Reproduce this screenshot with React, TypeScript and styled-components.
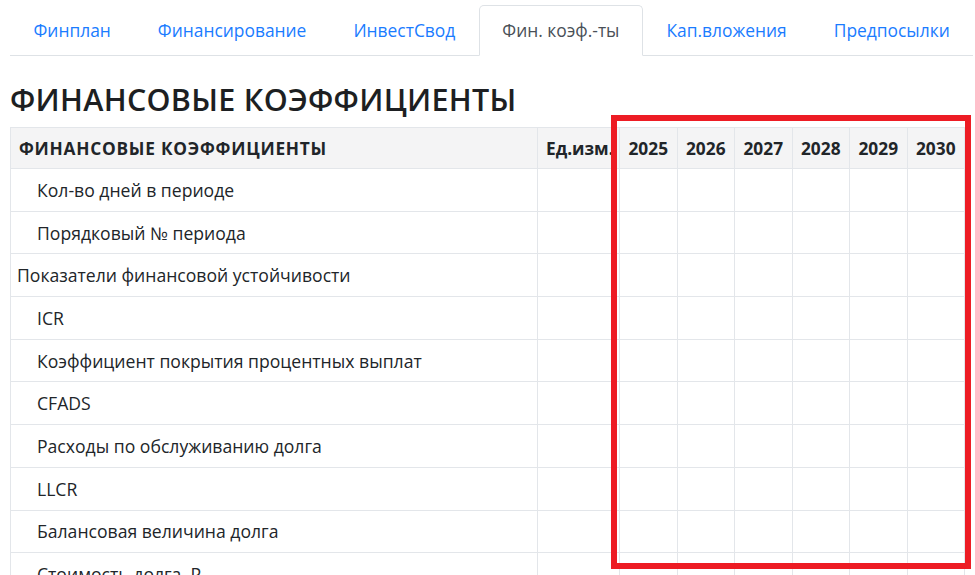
import styled, { createGlobalStyle } from 'styled-components';

const GlobalStyle = createGlobalStyle`
    html, body {
        margin: 0;
        padding: 0;
        background: #fff;
    }
    body {
        font-family: "Open Sans", "Liberation Sans", sans-serif;
        color: #212529;
        overflow: hidden;
    }
`;

const years = [2025, 2026, 2027, 2028, 2029, 2030];

const tabs = ['Финплан', 'Финансирование', 'ИнвестСвод', 'Фин. коэф.-ты', 'Кап.вложения', 'Предпосылки'];
const activeTab = 'Фин. коэф.-ты';

const rows = [
    { title: 'Кол-во дней в периоде', sub: true },
    { title: 'Порядковый № периода', sub: true },
    { title: 'Показатели финансовой устойчивости', sub: false },
    { title: 'ICR', sub: true },
    { title: 'Коэффициент покрытия процентных выплат', sub: true },
    { title: 'CFADS', sub: true },
    { title: 'Расходы по обслуживанию долга', sub: true },
    { title: 'LLCR', sub: true },
    { title: 'Балансовая величина долга', sub: true },
    { title: 'Стоимость долга, Р', sub: true },
];

const Page = styled.div`
    padding: 5px 2px 0 10px;
`;

const TabBar = styled.ul`
    display: flex;
    margin: 0;
    padding: 0;
    list-style: none;
    border-bottom: 1px solid #dee2e6;
`;

const Tab = styled.li<{ $active?: boolean }>`
    margin-bottom: -1px;
    padding: 12px 22.5px 13px;
    font-size: 17.4px;
    line-height: 24px;
    color: ${(p) => (p.$active ? '#495057' : '#1a7cff')};
    background: ${(p) => (p.$active ? '#fff' : 'transparent')};
    border: 1px solid ${(p) => (p.$active ? '#dee2e6' : 'transparent')};
    border-bottom-color: ${(p) => (p.$active ? '#fff' : 'transparent')};
    border-radius: 5px 5px 0 0;
    white-space: nowrap;
`;

const Title = styled.h1`
    margin: 25px 0 10px;
    font-size: 30.5px;
    line-height: 36px;
    font-weight: 600;
    letter-spacing: 0.3px;
    color: #1d1f22;
`;

const TableWrap = styled.div`
    position: relative;
    width: 954px;
`;

const Table = styled.table`
    width: 954px;
    border-collapse: collapse;
    table-layout: fixed;
    font-size: 17.6px;
`;

const HeadCell = styled.th<{ $align?: string; $wide?: boolean }>`
    height: 40px;
    padding: 0 8px;
    background: #f4f4f5;
    border: 1.5px solid #e3e6ea;
    font-size: 17.3px;
    font-weight: 700;
    letter-spacing: ${(p) => (p.$wide ? '0.75px' : '0')};
    text-align: ${(p) => p.$align || 'left'};
    white-space: nowrap;
    overflow: hidden;
    color: #212529;
`;

const Cell = styled.td<{ $indent?: boolean }>`
    height: 41.7px;
    padding: 0 8px 0 ${(p) => (p.$indent ? '26px' : '6px')};
    border: 1.5px solid #e3e6ea;
    white-space: nowrap;
    overflow: hidden;
    color: #212529;
`;

const Highlight = styled.div`
    position: absolute;
    left: 601px;
    top: -12px;
    width: 360px;
    height: 454px;
    box-sizing: border-box;
    border: 6px solid #ed1c24;
    pointer-events: none;
`;

export default function App() {
    return (
        <>
            <GlobalStyle />
            <Page>
                <TabBar>
                    {tabs.map((t) => (
                        <Tab key={t} $active={t === activeTab}>{t}</Tab>
                    ))}
                </TabBar>

                <Title>ФИНАНСОВЫЕ КОЭФФИЦИЕНТЫ</Title>

                <TableWrap>
                    <Table>
                        <colgroup>
                            <col style={{ width: 527 }} />
                            <col style={{ width: 82 }} />
                            {years.map((y) => <col key={y} style={{ width: 57.5 }} />)}
                        </colgroup>
                        <thead>
                            <tr>
                                <HeadCell $wide>ФИНАНСОВЫЕ КОЭФФИЦИЕНТЫ</HeadCell>
                                <HeadCell $align="right">Ед.изм.</HeadCell>
                                {years.map((y) => <HeadCell key={y} $align="center">{y}</HeadCell>)}
                            </tr>
                        </thead>
                        <tbody>
                            {rows.map((r) => (
                                <tr key={r.title}>
                                    <Cell $indent={r.sub}>{r.title}</Cell>
                                    <Cell />
                                    {years.map((y) => <Cell key={y} />)}
                                </tr>
                            ))}
                        </tbody>
                    </Table>
                    <Highlight />
                </TableWrap>
            </Page>
        </>
    );
}
